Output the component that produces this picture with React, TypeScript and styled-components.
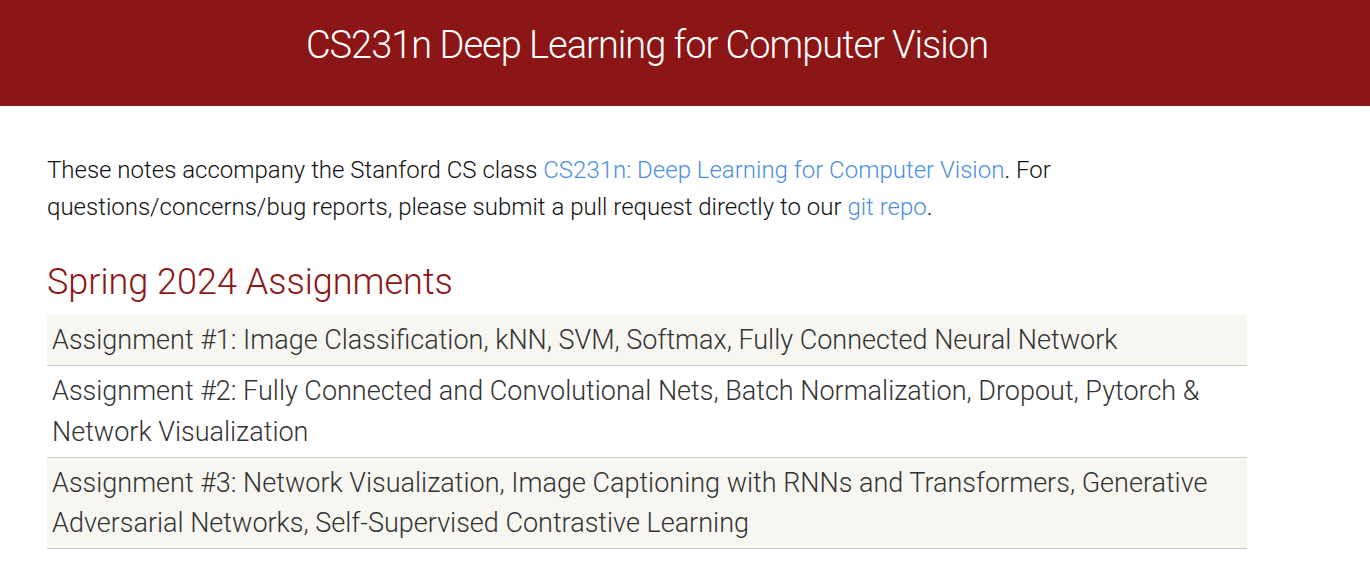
import styled, { createGlobalStyle } from 'styled-components';

const GlobalStyle = createGlobalStyle`
  body {
    margin: 0;
    background: #fff;
    font-family: Roboto, "Liberation Sans", sans-serif;
    font-weight: 300;
    color: #333;
  }
`;

const assignments = [
  'Assignment #1: Image Classification, kNN, SVM, Softmax, Fully Connected Neural Network',
  'Assignment #2: Fully Connected and Convolutional Nets, Batch Normalization, Dropout, Pytorch & Network Visualization',
  'Assignment #3: Network Visualization, Image Captioning with RNNs and Transformers, Generative Adversarial Networks, Self-Supervised Contrastive Learning',
];

const App = () => (
  <>
    <GlobalStyle />
    <Header>
      <SiteTitle>CS231n Deep Learning for Computer Vision</SiteTitle>
    </Header>
    <Main>
      <Intro>
        These notes accompany the Stanford CS class{' '}
        <Link href="#">CS231n: Deep Learning for Computer Vision</Link>. For
        questions/concerns/bug reports, please submit a pull request directly to our{' '}
        <Link href="#">git repo</Link>.
      </Intro>
      <SectionTitle>Spring 2024 Assignments</SectionTitle>
      <List>
        {assignments.map((a, i) => (
          <Row key={a} $shaded={i % 2 === 0}>
            {a}
          </Row>
        ))}
      </List>
    </Main>
  </>
);

export default App;

const Header = styled.header`
  background: #8c1515;
  height: 106px;
  display: flex;
  justify-content: center;
  align-items: flex-start;
`;

const SiteTitle = styled.div`
  margin-top: 21px;
  margin-left: -76px;
  color: #fff;
  font-size: 38px;
  font-weight: 300;
  letter-spacing: -1px;
  line-height: 48px;
`;

const Main = styled.main`
  width: 1200px;
  margin-left: 47px;
  padding-top: 46px;
`;

const Intro = styled.p`
  margin: 0;
  font-size: 24px;
  line-height: 37px;
  max-width: 1030px;
  color: #111;
`;

const Link = styled.a`
  color: #4b8fe2;
  text-decoration: none;
`;

const SectionTitle = styled.h2`
  margin: 34px 0 11px;
  font-size: 36px;
  font-weight: 300;
  line-height: 44px;
  color: #8c1515;
`;

const List = styled.div`
  display: flex;
  flex-direction: column;
`;

const Row = styled.div<{ $shaded: boolean }>`
  padding: 5px 5px 4.5px;
  font-size: 27px;
  line-height: 40.5px;
  color: #333;
  background: ${({ $shaded }) => ($shaded ? '#f7f6f1' : '#fff')};
  border-bottom: 1px solid #ccc;
`;
